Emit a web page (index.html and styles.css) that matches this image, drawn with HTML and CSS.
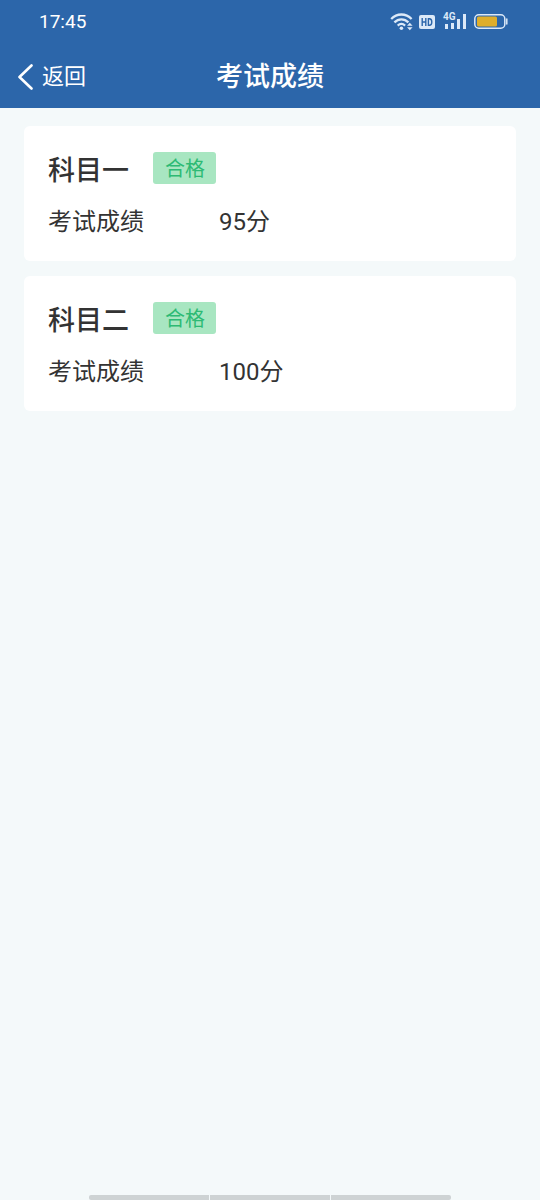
FILE: index.html
```html
<!DOCTYPE html>
<html lang="zh-CN">
<head>
<meta charset="utf-8">
<meta name="viewport" content="width=device-width, initial-scale=1">
<title>考试成绩</title>
<link rel="stylesheet" href="styles.css">
</head>
<body>
<header class="header">
  <div class="status">
    <time class="clock">17:45</time>
    <div class="indicators">
      <svg class="wifi" width="24" height="18" viewBox="0 0 24 18" aria-hidden="true">
        <g fill="none" stroke="currentColor" stroke-width="2.300">
          <path d="M1.200 6C7 0 15.800 0 21.600 6"/>
          <path d="M4.400 9.400c4-4 10-4 14 0"/>
          <path d="M7.700 12.600c2.200-2 5.200-2 7.400 0"/>
        </g>
        <circle cx="11.400" cy="15.200" r="1.800" fill="currentColor"/>
        <path d="M17 12.800l2.800-3 2.800 3zM17 14.200l2.800 3 2.800-3z" fill="currentColor"/>
      </svg>
      <svg class="hd" width="16" height="14" viewBox="0 0 16 14" aria-hidden="true">
        <rect width="16" height="14" rx="2" fill="currentColor"/>
        <path d="M3.200 3v8M6.800 3v8M3.200 7h3.600M9.400 3.700h1c1.700 0 2.400 1 2.400 3.300s-.7 3.300-2.400 3.300h-1z" fill="none" stroke="#2c66aa" stroke-width="1.400"/>
      </svg>
      <div class="signal">
        <span class="network">4G</span>
        <svg width="24" height="16" viewBox="0 0 24 16" aria-hidden="true">
          <path d="M2 10h3v5H2zM8 9h3v6H8zM14 5h3v10h-3zM20 0h3v15h-3z" fill="currentColor"/>
        </svg>
      </div>
      <svg class="battery" width="34" height="16" viewBox="0 0 34 16" aria-hidden="true">
        <rect x=".8" y=".8" width="30" height="13.400" rx="4" fill="none" stroke="currentColor" stroke-width="1.500"/>
        <rect x="3" y="2.500" width="20" height="10" rx="1.500" fill="#dfae2b"/>
        <path d="M32.800 5v5" stroke="currentColor" stroke-width="1.500" stroke-linecap="round"/>
      </svg>
    </div>
  </div>
  <nav class="navbar">
    <button class="back" type="button">
      <svg width="16" height="26" viewBox="0 0 16 26" aria-hidden="true">
        <path d="M13.500 1.500L1.500 13l12 11.500" fill="none" stroke="currentColor" stroke-width="2.600" stroke-linecap="round" stroke-linejoin="round"/>
      </svg>
      <span>返回</span>
    </button>
    <h1 class="title">考试成绩</h1>
  </nav>
</header>
<main class="results">
  <section class="card">
    <div class="card-head">
      <h2 class="subject">科目一</h2>
      <span class="badge">合格</span>
    </div>
    <dl class="score">
      <dt>考试成绩</dt>
      <dd>95分</dd>
    </dl>
  </section>
  <section class="card">
    <div class="card-head">
      <h2 class="subject">科目二</h2>
      <span class="badge">合格</span>
    </div>
    <dl class="score">
      <dt>考试成绩</dt>
      <dd>100分</dd>
    </dl>
  </section>
</main>
<footer class="gesture" aria-hidden="true"><span></span><span></span><span></span></footer>
</body>
</html>
```
FILE: styles.css
```css
* {
  box-sizing: border-box;
}

body {
  display: flex;
  flex-direction: column;
  min-height: 100vh;
  margin: 0;
  background: #f4f9fa;
  color: #333;
  font-family: Roboto, "Noto Sans CJK SC", sans-serif;
}

.header {
  background: #2c66aa;
  color: #fff;
}

.status {
  display: flex;
  justify-content: space-between;
  align-items: center;
  height: 43px;
  padding: 0 32px 0 39px;
}

.clock {
  font-size: 19px;
  font-weight: 400;
  line-height: 24px;
}

.indicators {
  display: flex;
  align-items: center;
  color: #dce9f8;
}

.indicators svg {
  display: block;
}

.wifi {
  margin-right: 5px;
}

.hd {
  margin-right: 8px;
}

.signal {
  position: relative;
  margin-right: 7px;
}

.network {
  position: absolute;
  top: -3px;
  left: 0;
  font-size: 10px;
  font-weight: 700;
  line-height: 12px;
}

.navbar {
  display: grid;
  grid-template-columns: 1fr auto 1fr;
  align-items: center;
  height: 65px;
  padding: 2px 18px 0;
}

.back {
  display: flex;
  align-items: center;
  justify-self: start;
  gap: 8px;
  padding: 0;
  border: 0;
  background: none;
  color: inherit;
  font: inherit;
  font-size: 22px;
  line-height: 32px;
}

.title {
  margin: 0;
  font-size: 27px;
  font-weight: 500;
  line-height: 40px;
}

.results {
  display: grid;
  gap: 15px;
  padding: 18px 24px;
}

.card {
  padding: 23px 24px 19px;
  border-radius: 6px;
  background: #fff;
}

.card-head {
  display: flex;
  align-items: center;
  gap: 24px;
}

.subject {
  margin: 0;
  padding-top: 6px;
  font-size: 27px;
  font-weight: 500;
  line-height: 32px;
}

.badge {
  padding: 3px 11px 0 12px;
  border-radius: 3px;
  background: #a8e6c1;
  color: #2dba74;
  font-size: 20px;
  line-height: 29px;
}

.score {
  display: grid;
  grid-template-columns: 171px 1fr;
  margin: 15px 0 0;
  font-size: 24px;
  line-height: 40px;
}

.score dd {
  margin: 0;
}

.gesture {
  display: grid;
  grid-template-columns: repeat(3, 1fr);
  gap: 1px;
  width: 67%;
  height: 5px;
  margin: auto auto 0;
  border-radius: 2px;
  overflow: hidden;
}

.gesture span {
  background: #ced3d4;
}
```
